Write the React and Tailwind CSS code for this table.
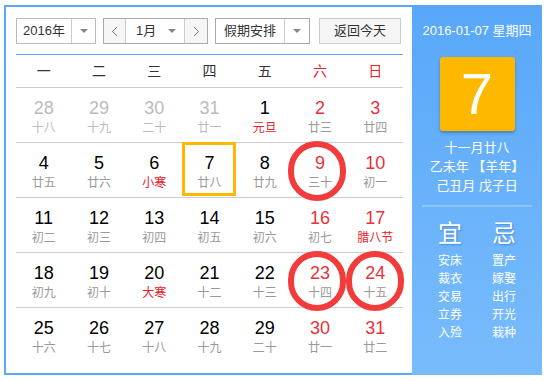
import React from "react";

const rows = [
  [
    { d: 28, l: "十八", dim: true },
    { d: 29, l: "十九", dim: true },
    { d: 30, l: "二十", dim: true },
    { d: 31, l: "廿一", dim: true },
    { d: 1, l: "元旦", fest: true },
    { d: 2, l: "廿三" },
    { d: 3, l: "廿四" },
  ],
  [
    { d: 4, l: "廿五" },
    { d: 5, l: "廿六" },
    { d: 6, l: "小寒", fest: true },
    { d: 7, l: "廿八", today: true },
    { d: 8, l: "廿九" },
    { d: 9, l: "三十", circle: true },
    { d: 10, l: "初一" },
  ],
  [
    { d: 11, l: "初二" },
    { d: 12, l: "初三" },
    { d: 13, l: "初四" },
    { d: 14, l: "初五" },
    { d: 15, l: "初六" },
    { d: 16, l: "初七" },
    { d: 17, l: "腊八节", fest: true },
  ],
  [
    { d: 18, l: "初九" },
    { d: 19, l: "初十" },
    { d: 20, l: "大寒", fest: true },
    { d: 21, l: "十二" },
    { d: 22, l: "十三" },
    { d: 23, l: "十四", circle: true },
    { d: 24, l: "十五", circle: true },
  ],
  [
    { d: 25, l: "十六" },
    { d: 26, l: "十七" },
    { d: 27, l: "十八" },
    { d: 28, l: "十九" },
    { d: 29, l: "二十" },
    { d: 30, l: "廿一" },
    { d: 31, l: "廿二" },
  ],
];

const weekdays = ["一", "二", "三", "四", "五", "六", "日"];
const yi = ["安床", "裁衣", "交易", "立券", "入殓"];
const ji = ["置产", "嫁娶", "出行", "开光", "栽种"];

function Caret() {
  return (
    <span className="block w-0 h-0 border-l-[4px] border-r-[4px] border-t-[4px] border-l-transparent border-r-transparent border-t-[#888]"></span>
  );
}

function Cell({ cell, col }) {
  const weekend = col >= 5;
  let numColor = "text-black";
  if (cell.dim) numColor = "text-[#bbb]";
  else if (weekend) numColor = "text-[#e8323c]";
  let lunarColor = "text-[#999]";
  if (cell.dim) lunarColor = "text-[#bbb]";
  if (cell.fest) lunarColor = "text-[#e8202a]";

  return (
    <div className="relative flex flex-col items-center pt-[10px]">
      <div className={`text-[18px] leading-[20px] ${numColor}`}>{cell.d}</div>
      <div className={`mt-[3px] text-[12px] leading-[15px] ${lunarColor}`}>
        {cell.l}
      </div>
      {cell.today && (
        <div className="absolute left-0 top-[-1px] w-[54px] h-[54px] border-[3px] border-[#ffb800]"></div>
      )}
      {cell.circle && (
        <div
          className={`absolute top-[-2px] w-[58px] h-[60px] rounded-full border-[6px] border-[#f23c3c] ${
            col === 5 ? "left-[-4px]" : "left-[-2px]"
          }`}
        ></div>
      )}
    </div>
  );
}

export default function App() {
  return (
    <div className="w-[546px] h-[381px] bg-white pl-[4px] pt-[5px] font-['Liberation_Sans','Noto_Sans_CJK_SC',sans-serif]">
      <div className="flex w-[538px] h-[370px]">
        {/* left calendar */}
        <div className="w-[408px] h-full border-l-2 border-t-2 border-b-2 border-[#5aa8f8] pl-[10px] pr-[9px] pt-[11px]">
          <div className="flex h-[26px] text-[13px] text-[#333] whitespace-nowrap">
            <div className="flex w-[80px] border border-[#bbb]">
              <div className="w-[55px] flex items-center justify-center border-r border-[#ccc]">
                2016年
              </div>
              <div className="flex-1 flex items-center justify-center">
                <Caret />
              </div>
            </div>
            <div className="flex w-[105px] ml-[7px] border border-[#aaa]">
              <div className="w-[22px] flex items-center justify-center bg-[#f6f6f6] border-r border-[#ccc]">
                <svg width="7" height="11" viewBox="0 0 7 11">
                  <path d="M6 1 L1.5 5.5 L6 10" fill="none" stroke="#777" strokeWidth="1" />
                </svg>
              </div>
              <div className="flex-1 flex items-center justify-between pl-[10px] pr-[8px] border-r border-[#ccc]">
                <span>1月</span>
                <Caret />
              </div>
              <div className="w-[22px] flex items-center justify-center bg-[#f6f6f6]">
                <svg width="7" height="11" viewBox="0 0 7 11">
                  <path d="M1 1 L5.5 5.5 L1 10" fill="none" stroke="#777" strokeWidth="1" />
                </svg>
              </div>
            </div>
            <div className="flex w-[95px] ml-[7px] border border-[#aaa]">
              <div className="w-[69px] flex items-center justify-center border-r border-[#ccc]">
                假期安排
              </div>
              <div className="flex-1 flex items-center justify-center">
                <Caret />
              </div>
            </div>
            <div className="w-[82px] ml-[9px] flex items-center justify-center border border-[#ccc] bg-[#f5f5f5]">
              返回今天
            </div>
          </div>

          <div className="mt-[10px] border-t border-[#5aa8f8]"></div>

          <div className="grid grid-cols-7 h-[33px] border-b border-[#ccc] text-[14px]">
            {weekdays.map((w, i) => (
              <div
                key={w}
                className={`flex items-center justify-center ${
                  i >= 5 ? "text-[#e8202a]" : "text-[#333]"
                }`}
              >
                {w}
              </div>
            ))}
          </div>

          {rows.map((row, r) => (
            <div
              key={r}
              className={`grid grid-cols-7 h-[55px] ${
                r < rows.length - 1 ? "border-b border-[#ccc]" : ""
              }`}
            >
              {row.map((cell, c) => (
                <Cell key={c} cell={cell} col={c} />
              ))}
            </div>
          ))}
        </div>

        {/* right info panel */}
        <div className="w-[130px] h-full bg-gradient-to-b from-[#58a7f9] to-[#79bcfc] flex flex-col items-center text-white">
          <div className="mt-[18px] text-[13px] leading-[16px]">2016-01-07 星期四</div>
          <div className="mt-[18px] w-[75px] h-[74px] rounded-[3px] bg-[#ffb800] shadow-[0_2px_3px_rgba(0,0,0,0.25)] flex items-center justify-center text-[58px] leading-none">
            7
          </div>
          <div className="mt-[7px] text-[13px] leading-[19px] text-center">
            <div>十一月廿八</div>
            <div>乙未年 【羊年】</div>
            <div>己丑月 戊子日</div>
          </div>
          <div className="mt-[10px] w-[110px] h-[2px] bg-[#8cc5fb]"></div>
          <div className="mt-[13px] flex w-full justify-center gap-[30px]">
            <div className="flex flex-col items-center">
              <div className="text-[24px] leading-[28px] [text-shadow:1px_1px_2px_rgba(0,60,140,0.35)]">宜</div>
              <div className="mt-[4px] text-[12px] leading-[18px]">
                {yi.map((t) => (
                  <div key={t}>{t}</div>
                ))}
              </div>
            </div>
            <div className="flex flex-col items-center">
              <div className="text-[24px] leading-[28px] [text-shadow:1px_1px_2px_rgba(0,60,140,0.35)]">忌</div>
              <div className="mt-[4px] text-[12px] leading-[18px]">
                {ji.map((t) => (
                  <div key={t}>{t}</div>
                ))}
              </div>
            </div>
          </div>
        </div>
      </div>
    </div>
  );
}
